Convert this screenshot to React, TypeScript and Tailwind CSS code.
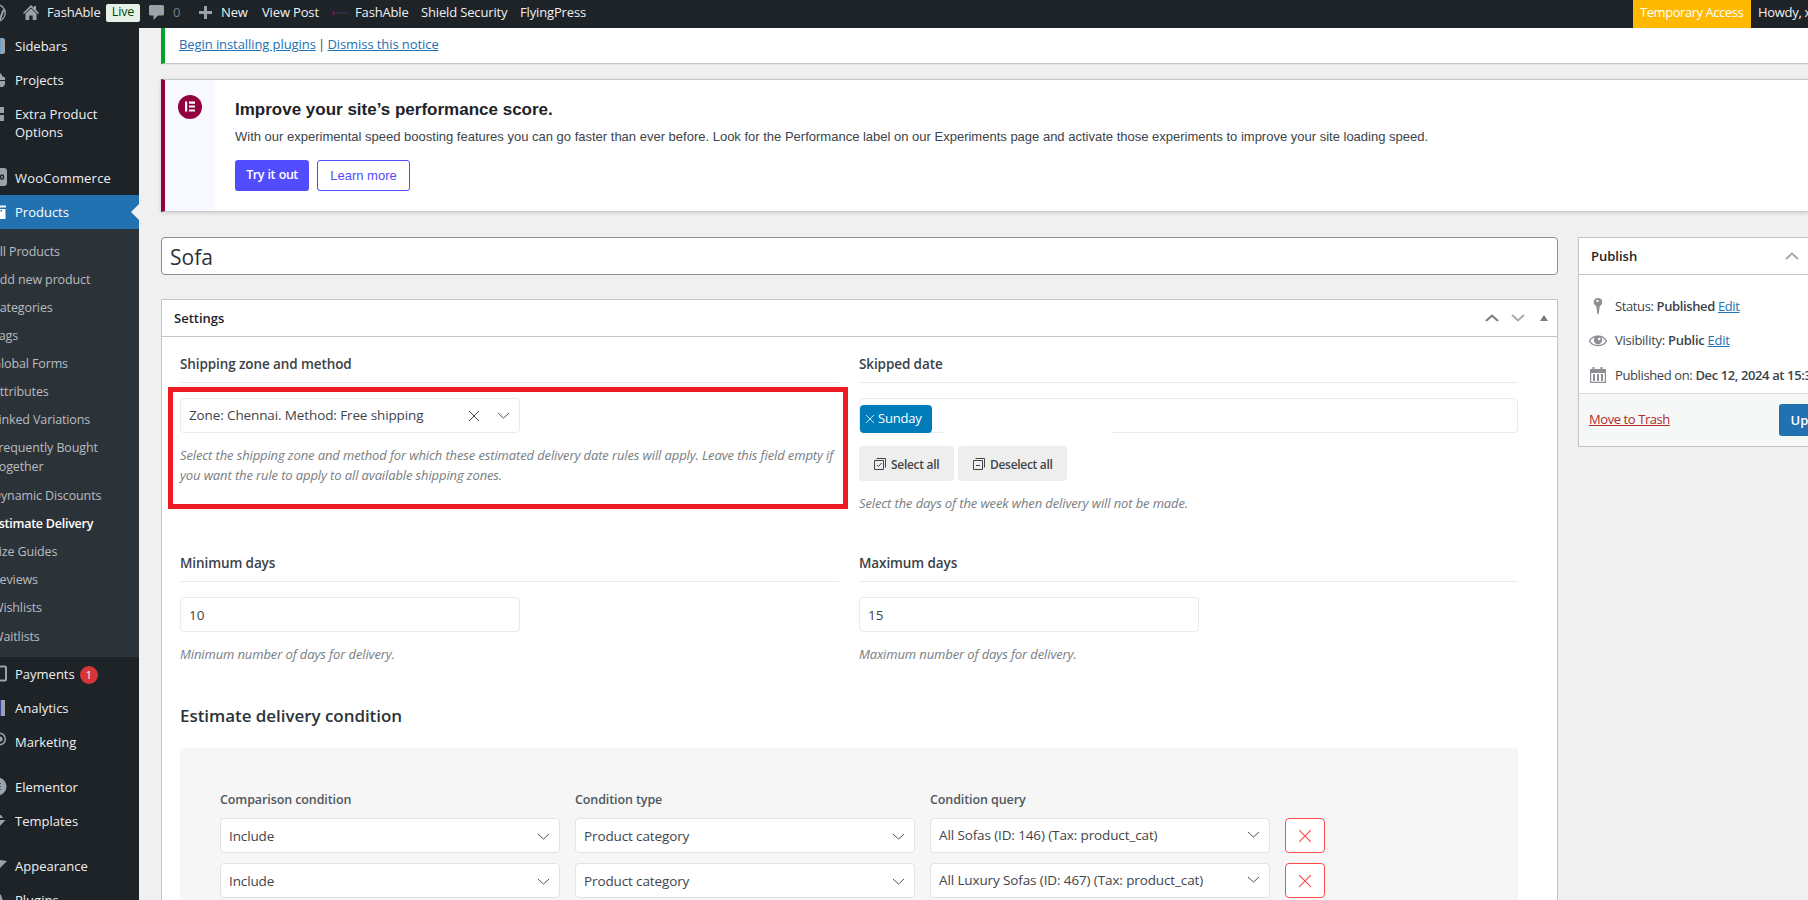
import type { ReactNode } from "react";

type MenuItem = {
  label: string;
  icon: ReactNode;
  badge?: number;
  active?: boolean;
  tall?: boolean;
  spacing?: string;
};

const topMenu: MenuItem[] = [
  {
    label: "Sidebars",
    icon: (
      <>
        <path fill="#9ca2a7" d="M3 2h14.500a2.500 2.500 0 0 1 2.500 2.500v11a2.500 2.500 0 0 1-2.500 2.500H3z" />
        <path fill="#5b9dd0" d="M15 2h.8v16H15z" />
      </>
    ),
  },
  { label: "Projects", icon: <path fill="#9ca2a7" d="M4 5l2-2h9l2 2v1l3 1.500V10H2V7zM2 11h18v3.500L18 17H4l-2-2.500z" /> },
  { label: "Extra Product Options", tall: true, icon: <path fill="#9ca2a7" d="M2 3h17v6H2zm0 8h17v6H2z" /> },
  {
    label: "WooCommerce",
    spacing: "mt-3 tracking-[0.2px]",
    icon: (
      <>
        <rect x="-2" y="0" width="24" height="18" rx="3" fill="#9ca2a7" />
        <ellipse cx="17" cy="9" rx="1.500" ry="2.200" fill="none" stroke="#1d2327" strokeWidth="1.300" />
      </>
    ),
  },
  {
    label: "Products",
    active: true,
    icon: <path fill="#fff" d="M0 3.500h21v2H0zM1 7h19.500v10H1zm14.500 1v1.500H17V8z" fillRule="evenodd" />,
  },
];

const subMenu = [
  "All Products",
  "Add new product",
  "Categories",
  "Tags",
  "Global Forms",
  "Attributes",
  "Linked Variations",
  "Frequently Bought Together",
  "Dynamic Discounts",
  "Estimate Delivery",
  "Size Guides",
  "Reviews",
  "Wishlists",
  "Waitlists",
];

const bottomMenu: MenuItem[] = [
  {
    label: "Payments",
    badge: 1,
    icon: <rect x="1" y="2.500" width="20" height="14" rx="1" fill="none" stroke="#9ca2a7" strokeWidth="2" />,
  },
  {
    label: "Analytics",
    icon: (
      <>
        <path fill="#9ca2a7" d="M16 2h4v16h-4z" />
        <path fill="#33419b" d="M15 2h1v16h-1z" />
      </>
    ),
  },
  {
    label: "Marketing",
    icon: (
      <>
        <circle cx="14.500" cy="7" r="5.800" fill="none" stroke="#9ca2a7" strokeWidth="1.500" />
        <circle cx="15" cy="7" r="2.600" fill="#9ca2a7" />
      </>
    ),
  },
  {
    label: "Elementor",
    spacing: "mt-[11px]",
    icon: (
      <>
        <circle cx="12.500" cy="9.500" r="9" fill="#9ca2a7" />
        <path stroke="#1d5a8a" strokeWidth="1.200" d="M12 6.500h4M12 9.500h4M12 12.500h4" />
      </>
    ),
  },
  { label: "Templates", icon: <path fill="#9ca2a7" d="M5 4h11l2 3H5zm0 5h15.500l-5.500 6H5z" /> },
  { label: "Appearance", spacing: "mt-[11px]", icon: <path fill="#9ca2a7" d="M8 3l7 1 7 1-6 6-3 4z" /> },
  { label: "Plugins", icon: <path fill="#9ca2a7" d="M8 6l5-3 3 2 2 6-7 6z" /> },
];

const conditions = ["All Sofas (ID: 146) (Tax: product_cat)", "All Luxury Sofas (ID: 467) (Tax: product_cat)"];

function SideItem({ item }: { item: MenuItem }) {
  return (
    <div
      className={`relative flex shrink-0 gap-[10px] text-[13px] leading-[18px] ${item.tall ? "h-[52px]" : "h-[34px]"} ${
        item.spacing ?? ""
      } ${item.active ? "bg-[#2271b1] text-white" : "text-[#f0f0f1]"}`}
    >
      <svg className="mt-[7px] -ml-[15px] size-5 shrink-0 overflow-visible" viewBox="0 0 20 20">
        {item.icon}
      </svg>
      <span className={`pt-2 ${item.tall ? "w-[90px]" : ""}`}>{item.label}</span>
      {item.badge && (
        <span className="mt-[8.500px] -ml-[5px] flex size-[18px] items-center justify-center rounded-full bg-[#d63638] text-[10.500px] text-white">
          {item.badge}
        </span>
      )}
      {item.active && (
        <svg className="absolute top-[9px] right-0 h-4 w-2" viewBox="0 0 8 16">
          <path d="M8 0v16L0 8z" fill="#f0f0f1" />
        </svg>
      )}
    </div>
  );
}

function Sidebar() {
  return (
    <nav className="flex w-[139px] shrink-0 flex-col overflow-hidden bg-[#1d2327] pt-px">
      {topMenu.map((item) => (
        <SideItem key={item.label} item={item} />
      ))}
      <ul className="shrink-0 bg-[#2c3338] pt-[8px] pb-[7px] text-[12.500px] leading-[19px] tracking-[-0.12px] text-[#b8bcc0]">
        {subMenu.map((label) => (
          <li
            key={label}
            className={`-ml-[8px] pt-[4.500px] ${label.startsWith("Freq") ? "h-[47.4px] w-[120px]" : "h-[28.15px] whitespace-nowrap"} ${
              label === "Estimate Delivery" ? "font-semibold tracking-[-0.25px] text-white" : ""
            }`}
          >
            {label}
          </li>
        ))}
      </ul>
      {bottomMenu.map((item) => (
        <SideItem key={item.label} item={item} />
      ))}
    </nav>
  );
}

function AdminBar() {
  return (
    <header className="flex h-7 shrink-0 items-center bg-[#1d2327] pb-[3px] text-[13px] tracking-[-0.15px] whitespace-nowrap text-[#f0f0f1]">
      <svg className="-ml-[12px] size-[18px] shrink-0" viewBox="0 0 18 18">
        <circle cx="9" cy="9" r="8.200" fill="none" stroke="#9ca2a7" strokeWidth="1.400" />
        <path d="M2.500 5l4 10 2.500-7 3 7L15.500 6" fill="none" stroke="#9ca2a7" strokeWidth="2" />
      </svg>
      <svg className="ml-[17px] h-[15px] w-4 shrink-0" viewBox="0 0 16 15">
        <path fill="#9ca2a7" d="M8 0l3 2.800V1h2v3.700L16 8l-1 .9L8 2.400 1 8.900 0 8z" />
        <path fill="#9ca2a7" d="M8 3.600l5.500 5V15H9.700v-4.500H6.300V15H2.500V8.600z" />
      </svg>
      <span className="ml-2 w-[51px]">FashAble</span>
      <span className="ml-2 flex h-[18px] w-[34px] items-center justify-center rounded-[2px] bg-[#e6f2e8] text-[12.500px] font-medium text-[#00450c]">
        Live
      </span>
      <svg className="ml-[9px] h-[15px] w-[15px] shrink-0" viewBox="0 0 15 15">
        <path fill="#9ca2a7" d="M1.500 0h12A1.500 1.500 0 0 1 15 1.500v7.500a1.500 1.500 0 0 1-1.500 1.500H9L4.500 15v-4.500h-3A1.500 1.500 0 0 1 0 9V1.500A1.500 1.500 0 0 1 1.500 0z" />
      </svg>
      <span className="ml-[9px] w-[26px] text-[#787d82]">0</span>
      <svg className="h-[13px] w-[13px] shrink-0" viewBox="0 0 13 13">
        <path fill="#9ca2a7" d="M5 0h3v5h5v3H8v5H5V8H0V5h5z" />
      </svg>
      <span className="ml-[9px] w-[41px]">New</span>
      <span className="w-[70px]">View Post</span>
      <svg className="h-[4px] w-[18px] shrink-0" viewBox="0 0 18 4">
        <path d="M0 4l1-4h2v4z" fill="#5c2150" />
        <path d="M4.500 2h12.500" stroke="#3a2850" strokeWidth="2.500" strokeDasharray="1.500 .5" />
      </svg>
      <span className="ml-[5px] w-[66px]">FashAble</span>
      <span className="w-[99px]">Shield Security</span>
      <span>FlyingPress</span>
      <div className="-mb-[3px] ml-auto flex h-7 w-[118px] shrink-0 items-center bg-[#ffb900] pb-[3px] pl-[7px] tracking-[-0.45px] text-white">
        Temporary Access
      </div>
      <span className="w-[57px] shrink-0 overflow-hidden pl-[7px] tracking-[-0.3px]">Howdy, xstore</span>
    </header>
  );
}

function Notices() {
  return (
    <>
      <div className="h-[36px] shrink-0 border-b border-l-4 border-b-[#c3c4c7] border-l-[#00a32a] bg-white pt-[7px] pl-[14px] text-[13px] leading-[18px] tracking-[-0.08px] text-[#3c434a] shadow-[0_1px_1px_rgba(0,0,0,0.04)]">
        <a className="text-[#2271b1] underline">Begin installing plugins</a> <span className="-mx-px">|</span>{" "}
        <a className="text-[#2271b1] underline">Dismiss this notice</a>
      </div>
      <div className="mt-[15px] flex h-[133px] shrink-0 border-y border-l-4 border-y-[#c8c9cc] border-l-[#93003f] bg-white font-['Liberation_Sans',sans-serif] shadow-[0_1px_4px_rgba(0,0,0,0.15)]">
        <div className="flex w-[50px] shrink-0 justify-center bg-[#f8f8ff] pt-[15px]">
          <svg className="size-6" viewBox="0 0 24 24">
            <circle cx="12" cy="12" r="12" fill="#93003f" />
            <path fill="#fff" d="M7 6.500h2.200v10H7zm4 0h6v2.200h-6zm0 4h6v2h-6zm0 3.900h6v2.100h-6z" />
          </svg>
        </div>
        <div className="pl-5">
          <h3 className="mt-[19px] text-[17px] leading-[22px] font-bold text-[#1d2327]">
            Improve your site’s performance score.
          </h3>
          <p className="mt-[7px] text-[13px] leading-[18px] whitespace-nowrap text-[#3c434a]">
            With our experimental speed boosting features you can go faster than ever before. Look for the Performance label
            on our Experiments page and activate those experiments to improve your site loading speed.
          </p>
          <div className="mt-[14px] flex gap-2 text-[13px]">
            <button className="h-[31px] w-[74px] rounded-[3px] bg-[#524cff] pb-px font-['Open_Sans',sans-serif] text-[12.500px] font-semibold tracking-[-0.5px] [word-spacing:1px] text-white">
              Try it out
            </button>
            <button className="h-[31px] w-[93px] rounded-[3px] border border-[#524cff] text-[#524cff]">Learn more</button>
          </div>
        </div>
      </div>
    </>
  );
}

function Chevron({ className, up }: { className: string; up?: boolean }) {
  return (
    <svg className={className} viewBox="0 0 14 8" fill="none" stroke="currentColor">
      <path d={up ? "M1 7l6-5.500L13 7" : "M1 1l6 5.500L13 1"} />
    </svg>
  );
}

function Cross({ className }: { className: string }) {
  return (
    <svg className={className} viewBox="0 0 10 10" fill="none" stroke="currentColor">
      <path d="M0 0l10 10M10 0L0 10" />
    </svg>
  );
}

function Field({ label, help, children }: { label: string; help: string; children: ReactNode }) {
  return (
    <div>
      <h4 className="h-[34px] border-b border-[#eaeaea] pt-[5px] text-[13.500px] leading-[20px] font-semibold tracking-[-0.1px] text-[#3c4147]">
        {label}
      </h4>
      <div className="pt-[15px]">{children}</div>
      <p className="mt-[12px] text-[13px] leading-[20px] tracking-[-0.12px] whitespace-pre text-[#787d82] italic">{help}</p>
    </div>
  );
}

function SelectBox({ value, raised }: { value: string; raised?: boolean }) {
  return (
    <div
      className={`flex h-[35px] w-[340px] items-center justify-between rounded border border-[#e3e3e3] bg-white pr-[9px] pl-2 text-[13.500px] tracking-[-0.12px] text-[#3f444a] ${
        raised ? "" : "pt-[2px]"
      }`}
    >
      {value}
      <Chevron className={`h-[7.500px] w-[13px] ${raised ? "-mt-[2px]" : ""}`} />
    </div>
  );
}

function ShippingZone() {
  return (
    <div className="flex h-[35px] w-[340px] items-center rounded border border-[#eaeaea] pr-[9px] pl-2 text-[13.500px] tracking-[-0.12px] text-[#3f444a]">
      <span className="flex-1 pb-px">Zone: Chennai. Method: Free shipping</span>
      <Cross className="size-[10px]" />
      <Chevron className="ml-[18px] h-[7.500px] w-[13px]" />
    </div>
  );
}

function SkippedDates() {
  return (
    <>
      <div className="relative h-[35px] rounded border border-[#eaeaea] pt-[6px]">
        <div className="flex h-7 w-[72px] items-center gap-[4px] rounded bg-[#007cba] pl-[6px] text-[13px] tracking-[-0.2px] text-white">
          <Cross className="size-[8px]" />
          Sunday
        </div>
        <div className="absolute -bottom-px left-[83px] h-[2px] w-[168px] bg-white" />
      </div>
      <div className="mt-[13px] flex gap-1 text-[12px] font-semibold tracking-[-0.3px] text-[#444]">
        <button className="flex h-[35px] w-[95px] items-center gap-[5px] rounded bg-[#eee] pt-[2px] pl-[15px]">
          <svg className="mb-px size-[12px]" viewBox="0 0 12 12" fill="none" stroke="currentColor">
            <path d="M.5 2.500h9v9h-9zM2.500.5h9v9M3 7l1.500 1.500L7.500 5" />
          </svg>
          Select all
        </button>
        <button className="flex h-[35px] w-[109px] items-center gap-[5px] rounded bg-[#eee] pt-[2px] pl-[15px]">
          <svg className="mb-px size-[12px]" viewBox="0 0 12 12" fill="none" stroke="currentColor">
            <path d="M.5 2.500h9v9h-9zM2.500.5h9v9M3 7.500h4" />
          </svg>
          Deselect all
        </button>
      </div>
    </>
  );
}

function Days({ value }: { value: number }) {
  return (
    <div className="flex h-[35px] w-[340px] items-center rounded border border-[#eaeaea] pt-[2px] pl-2 text-[13.500px] text-[#3f444a]">
      {value}
    </div>
  );
}

function Conditions() {
  return (
    <div className="mt-[20px] h-[200px] rounded bg-[#f6f6f6] px-10 pt-[42px]">
      <div className="grid grid-cols-[340px_340px_340px_40px] gap-x-[15px] gap-y-[10px]">
        {["Comparison condition", "Condition type", "Condition query"].map((h) => (
          <div key={h} className="h-[18px] text-[12.500px] leading-[20px] font-semibold tracking-[-0.1px] text-[#50575e]">
            {h}
          </div>
        ))}
        <div />
        {conditions.map((query) => (
          <div key={query} className="contents">
            <SelectBox value="Include" />
            <SelectBox value="Product category" />
            <SelectBox value={query} raised />
            <button className="flex h-[35px] items-center justify-center rounded border border-[#ff4b4b] bg-white text-[#ff4b4b]">
              <Cross className="size-[12px]" />
            </button>
          </div>
        ))}
      </div>
    </div>
  );
}

function SettingsBox() {
  return (
    <section className="mt-[24px] h-[640px] border border-[#c3c4c7] bg-white">
      <div className="flex h-[37px] items-center border-b border-[#c3c4c7] pl-3 text-[13px] font-semibold text-[#1d2327]">
        <span className="flex-1 pt-px">Settings</span>
        <Chevron up className="h-[8px] w-[14px] stroke-2 text-[#787c82]" />
        <Chevron className="ml-[12px] h-[8px] w-[14px] stroke-2 text-[#a7aaad]" />
        <svg className="mr-[9px] ml-[15px] h-[6px] w-2" viewBox="0 0 8 6">
          <path d="M4 0l4 6H0z" fill="#787c82" />
        </svg>
      </div>
      <div className="relative pt-[12px] pr-[39px] pl-[18px]">
        <div className="grid grid-cols-2 gap-x-5">
          <div className="h-[199px]">
            <Field
              label="Shipping zone and method"
              help={
                "Select the shipping zone and method for which these estimated delivery date rules will apply. Leave this field empty if\nyou want the rule to apply to all available shipping zones."
              }
            >
              <ShippingZone />
            </Field>
          </div>
          <Field label="Skipped date" help="Select the days of the week when delivery will not be made.">
            <SkippedDates />
          </Field>
          <Field label="Minimum days" help="Minimum number of days for delivery.">
            <Days value={10} />
          </Field>
          <Field label="Maximum days" help="Maximum number of days for delivery.">
            <Days value={15} />
          </Field>
        </div>
        <h2 className="mt-[38px] pt-px text-[17px] leading-[25px] font-semibold tracking-[-0.05px] text-[#2c3338]">
          Estimate delivery condition
        </h2>
        <Conditions />
        {/* highlighted region around the shipping zone field */}
        <div className="absolute top-[50px] left-[6px] h-[122px] w-[680px] border-5 border-[#ed1c24]" />
      </div>
    </section>
  );
}

function PublishBox() {
  return (
    <aside className="h-[210px] w-[281px] shrink-0 border border-[#c3c4c7] bg-white text-[13px] text-[#3c434a]">
      <div className="flex h-[37px] items-center border-b border-[#c3c4c7] pl-3 font-semibold text-[#1d2327]">
        <span className="w-[194px] pt-px">Publish</span>
        <Chevron up className="h-[8px] w-[14px] stroke-2 text-[#a7aaad]" />
      </div>
      <div className="flex h-[119px] flex-col gap-[10.300px] border-b border-[#dcdcde] pt-[19px] pl-[10px] leading-6 tracking-[-0.38px] whitespace-nowrap">
        <div className="flex items-center">
          <svg className="mr-[8px] size-[18px]" viewBox="0 0 18 18" fill="#8c8f94">
            <path fillRule="evenodd" d="M9 1a4.200 4.200 0 0 1 1.800 8L9.700 17H8.300L7.200 9A4.200 4.200 0 0 1 9 1zM7.500 3v2h2V3z" />
          </svg>
          <span>
            Status: <b className="font-semibold">Published</b> <a className="text-[#2271b1] underline">Edit</a>
          </span>
        </div>
        <div className="flex items-center tracking-[-0.27px]">
          <svg className="mr-[8px] size-[18px]" viewBox="0 0 18 18">
            <path d="M.5 10C4 3.500 14 3.500 17.500 10 14 16 4 16 .5 10z" fill="none" stroke="#8c8f94" strokeWidth="1.300" />
            <circle cx="9" cy="9" r="4.200" fill="#8c8f94" />
            <circle cx="10.200" cy="8" r="1.300" fill="#fff" />
          </svg>
          <span>
            Visibility: <b className="font-semibold">Public</b> <a className="text-[#2271b1] underline">Edit</a>
          </span>
        </div>
        <div className="flex items-center">
          <svg className="mr-[8px] size-[18px]" viewBox="0 0 18 18" fill="#8c8f94">
            <path fillRule="evenodd" d="M1 3h2.500V1h2v2h6V1h2v2H17v14H1zm1.200 4v8.800h13.600V7z" />
            <path d="M4 8h2v7H4zm4 0h2v7H8zm4 0h2v7h-2z" />
          </svg>
          <span>
            Published on: <b className="font-semibold">Dec 12, 2024 at 15:35</b>
          </span>
        </div>
      </div>
      <div className="flex h-[52px] items-center justify-between bg-[#f6f7f7] pl-[10px]">
        <a className="tracking-[-0.42px] text-[#b32d2e] underline">Move to Trash</a>
        <button className="mr-[10px] h-8 w-[69px] rounded-[3px] bg-[#2271b1] pt-px font-semibold text-white">Update</button>
      </div>
    </aside>
  );
}

export default function App() {
  return (
    <div className="flex h-[900px] w-full flex-col overflow-hidden bg-[#f0f0f1] font-['Open_Sans',sans-serif] [font-stretch:94%]">
      <AdminBar />
      <div className="flex min-h-0 flex-1">
        <Sidebar />
        <main className="flex min-w-0 flex-1 flex-col overflow-hidden pl-[22px]">
          <Notices />
          <div className="mt-[25px] flex gap-5">
            <div className="w-[1397px] shrink-0">
              <div className="flex h-[38px] items-center rounded border border-[#8c8f94] bg-white pt-[3px] pl-2 text-[21px] text-[#2c3338]">
                Sofa
              </div>
              <SettingsBox />
            </div>
            <PublishBox />
          </div>
        </main>
      </div>
    </div>
  );
}
